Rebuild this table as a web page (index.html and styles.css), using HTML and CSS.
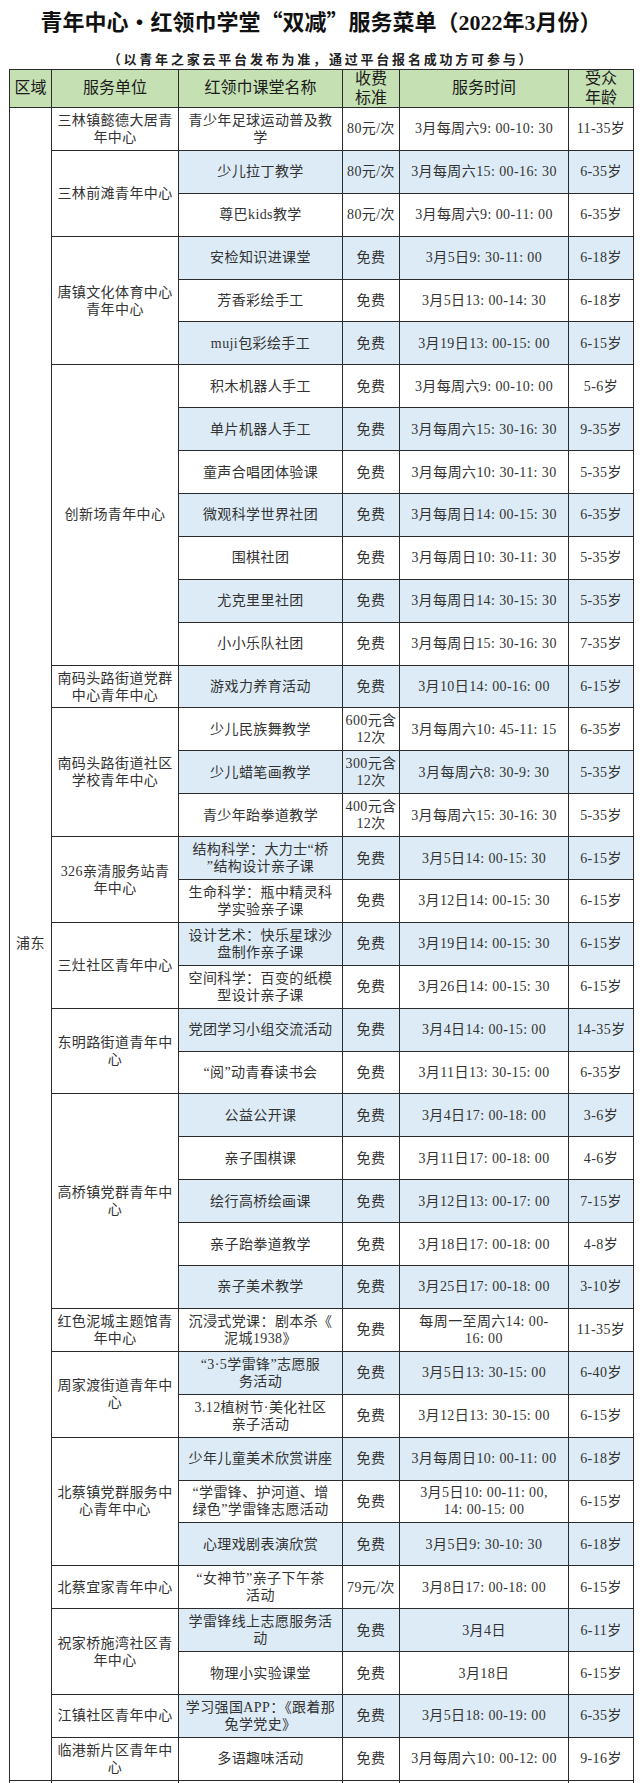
FILE: index.html
```html
<!DOCTYPE html>
<html lang="zh-CN">
<head>
<meta charset="utf-8">
<title>青年中心·红领巾学堂“双减”服务菜单</title>
<link rel="stylesheet" href="styles.css">
</head>
<body>
<div class="page">
  <h1 class="title">青年中心·红领巾学堂“双减”服务菜单（<span class="num">2022</span>年<span class="num">3</span>月份）</h1>
  <p class="sub">（以青年之家云平台发布为准，通过平台报名成功方可参与）</p>
  <table class="menu">
    <colgroup>
      <col class="c1"><col class="c2"><col class="c3"><col class="c4"><col class="c5"><col class="c6">
    </colgroup>
    <thead>
      <tr class="head">
        <th>区域</th><th>服务单位</th><th>红领巾课堂名称</th><th>收费<br>标准</th><th>服务时间</th><th>受众<br>年龄</th>
      </tr>
    </thead>
    <tbody>
      <tr class="r">
        <td class="u" rowspan="39">浦东</td>
        <td class="u">三林镇懿德大居青<br>年中心</td>
        <td>青少年足球运动普及教<br>学</td><td>80元/次</td><td>3月每周六9: 00-10: 30</td><td>11-35岁</td>
      </tr>
      <tr class="r b">
        <td class="u" rowspan="2">三林前滩青年中心</td>
        <td>少儿拉丁教学</td><td>80元/次</td><td>3月每周六15: 00-16: 30</td><td>6-35岁</td>
      </tr>
      <tr class="r">
        <td>尊巴kids教学</td><td>80元/次</td><td>3月每周六9: 00-11: 00</td><td>6-35岁</td>
      </tr>
      <tr class="r b">
        <td class="u" rowspan="3">唐镇文化体育中心<br>青年中心</td>
        <td>安检知识进课堂</td><td>免费</td><td>3月5日9: 30-11: 00</td><td>6-18岁</td>
      </tr>
      <tr class="r">
        <td>芳香彩绘手工</td><td>免费</td><td>3月5日13: 00-14: 30</td><td>6-18岁</td>
      </tr>
      <tr class="r b">
        <td>muji包彩绘手工</td><td>免费</td><td>3月19日13: 00-15: 00</td><td>6-15岁</td>
      </tr>
      <tr class="r">
        <td class="u" rowspan="7">创新场青年中心</td>
        <td>积木机器人手工</td><td>免费</td><td>3月每周六9: 00-10: 00</td><td>5-6岁</td>
      </tr>
      <tr class="r b">
        <td>单片机器人手工</td><td>免费</td><td>3月每周六15: 30-16: 30</td><td>9-35岁</td>
      </tr>
      <tr class="r">
        <td>童声合唱团体验课</td><td>免费</td><td>3月每周六10: 30-11: 30</td><td>5-35岁</td>
      </tr>
      <tr class="r b">
        <td>微观科学世界社团</td><td>免费</td><td>3月每周日14: 00-15: 30</td><td>6-35岁</td>
      </tr>
      <tr class="r">
        <td>围棋社团</td><td>免费</td><td>3月每周日10: 30-11: 30</td><td>5-35岁</td>
      </tr>
      <tr class="r b">
        <td>尤克里里社团</td><td>免费</td><td>3月每周日14: 30-15: 30</td><td>5-35岁</td>
      </tr>
      <tr class="r">
        <td>小小乐队社团</td><td>免费</td><td>3月每周日15: 30-16: 30</td><td>7-35岁</td>
      </tr>
      <tr class="r b">
        <td class="u">南码头路街道党群<br>中心青年中心</td>
        <td>游戏力养育活动</td><td>免费</td><td>3月10日14: 00-16: 00</td><td>6-15岁</td>
      </tr>
      <tr class="r">
        <td class="u" rowspan="3">南码头路街道社区<br>学校青年中心</td>
        <td>少儿民族舞教学</td><td>600元含<br>12次</td><td>3月每周六10: 45-11: 15</td><td>6-35岁</td>
      </tr>
      <tr class="r b">
        <td>少儿蜡笔画教学</td><td>300元含<br>12次</td><td>3月每周六8: 30-9: 30</td><td>5-35岁</td>
      </tr>
      <tr class="r">
        <td>青少年跆拳道教学</td><td>400元含<br>12次</td><td>3月每周六15: 30-16: 30</td><td>5-35岁</td>
      </tr>
      <tr class="r b">
        <td class="u" rowspan="2">326亲清服务站青<br>年中心</td>
        <td>结构科学：大力士“桥<br>”结构设计亲子课</td><td>免费</td><td>3月5日14: 00-15: 30</td><td>6-15岁</td>
      </tr>
      <tr class="r">
        <td>生命科学：瓶中精灵科<br>学实验亲子课</td><td>免费</td><td>3月12日14: 00-15: 30</td><td>6-15岁</td>
      </tr>
      <tr class="r b">
        <td class="u" rowspan="2">三灶社区青年中心</td>
        <td>设计艺术：快乐星球沙<br>盘制作亲子课</td><td>免费</td><td>3月19日14: 00-15: 30</td><td>6-15岁</td>
      </tr>
      <tr class="r">
        <td>空间科学：百变的纸模<br>型设计亲子课</td><td>免费</td><td>3月26日14: 00-15: 30</td><td>6-15岁</td>
      </tr>
      <tr class="r b">
        <td class="u" rowspan="2">东明路街道青年中<br>心</td>
        <td>党团学习小组交流活动</td><td>免费</td><td>3月4日14: 00-15: 00</td><td>14-35岁</td>
      </tr>
      <tr class="r">
        <td>“阅”动青春读书会</td><td>免费</td><td>3月11日13: 30-15: 00</td><td>6-35岁</td>
      </tr>
      <tr class="r b">
        <td class="u" rowspan="5">高桥镇党群青年中<br>心</td>
        <td>公益公开课</td><td>免费</td><td>3月4日17: 00-18: 00</td><td>3-6岁</td>
      </tr>
      <tr class="r">
        <td>亲子围棋课</td><td>免费</td><td>3月11日17: 00-18: 00</td><td>4-6岁</td>
      </tr>
      <tr class="r b">
        <td>绘行高桥绘画课</td><td>免费</td><td>3月12日13: 00-17: 00</td><td>7-15岁</td>
      </tr>
      <tr class="r">
        <td>亲子跆拳道教学</td><td>免费</td><td>3月18日17: 00-18: 00</td><td>4-8岁</td>
      </tr>
      <tr class="r b">
        <td>亲子美术教学</td><td>免费</td><td>3月25日17: 00-18: 00</td><td>3-10岁</td>
      </tr>
      <tr class="r">
        <td class="u">红色泥城主题馆青<br>年中心</td>
        <td>沉浸式党课：剧本杀《<br>泥城1938》</td><td>免费</td><td>每周一至周六14: 00-<br>16: 00</td><td>11-35岁</td>
      </tr>
      <tr class="r b">
        <td class="u" rowspan="2">周家渡街道青年中<br>心</td>
        <td>“3·5学雷锋”志愿服<br>务活动</td><td>免费</td><td>3月5日13: 30-15: 00</td><td>6-40岁</td>
      </tr>
      <tr class="r">
        <td>3.12植树节·美化社区<br>亲子活动</td><td>免费</td><td>3月12日13: 30-15: 00</td><td>6-15岁</td>
      </tr>
      <tr class="r b">
        <td class="u" rowspan="3">北蔡镇党群服务中<br>心青年中心</td>
        <td>少年儿童美术欣赏讲座</td><td>免费</td><td>3月每周日10: 00-11: 00</td><td>6-18岁</td>
      </tr>
      <tr class="r">
        <td>“学雷锋、护河道、增<br>绿色”学雷锋志愿活动</td><td>免费</td><td>3月5日10: 00-11: 00,<br>14: 00-15: 00</td><td>6-15岁</td>
      </tr>
      <tr class="r b">
        <td>心理戏剧表演欣赏</td><td>免费</td><td>3月5日9: 30-10: 30</td><td>6-18岁</td>
      </tr>
      <tr class="r">
        <td class="u">北蔡宜家青年中心</td>
        <td>“女神节”亲子下午茶<br>活动</td><td>79元/次</td><td>3月8日17: 00-18: 00</td><td>6-15岁</td>
      </tr>
      <tr class="r b">
        <td class="u" rowspan="2">祝家桥施湾社区青<br>年中心</td>
        <td>学雷锋线上志愿服务活<br>动</td><td>免费</td><td>3月4日</td><td>6-11岁</td>
      </tr>
      <tr class="r">
        <td>物理小实验课堂</td><td>免费</td><td>3月18日</td><td>6-15岁</td>
      </tr>
      <tr class="r b">
        <td class="u">江镇社区青年中心</td>
        <td>学习强国APP：《跟着那<br>兔学党史》</td><td>免费</td><td>3月5日18: 00-19: 00</td><td>6-35岁</td>
      </tr>
      <tr class="r">
        <td class="u">临港新片区青年中<br>心</td>
        <td>多语趣味活动</td><td>免费</td><td>3月每周六10: 00-12: 00</td><td>9-16岁</td>
      </tr>
      <tr class="r">
        <td class="u"></td><td class="u"></td><td></td><td></td><td></td><td></td>
      </tr>
    </tbody>
  </table>
</div>
</body>
</html>
```

FILE: styles.css
```css
html, body {
  margin: 0;
  padding: 0;
  background: #ffffff;
}

body {
  font-family: "Liberation Serif", "Noto Sans CJK SC", serif;
  color: #333333;
}

.page {
  padding: 0 7px 0 9px;
}

.title {
  margin: 0;
  height: 40px;
  line-height: 40px;
  text-align: center;
  font-family: "Noto Sans CJK SC", sans-serif;
  font-weight: 700;
  font-size: 22px;
  color: #111111;
  white-space: nowrap;
}

.title .num {
  font-family: "Liberation Serif", serif;
  font-weight: 700;
}

.sub {
  margin: 9px 0 0;
  height: 20px;
  line-height: 20px;
  text-align: center;
  font-family: "Noto Sans CJK SC", sans-serif;
  font-weight: 700;
  font-size: 13px;
  letter-spacing: 2.8px;
  color: #222222;
  white-space: nowrap;
}

.menu {
  width: 100%;
  border-collapse: collapse;
  table-layout: fixed;
}

.c1 { width: 42px; }
.c2 { width: 127px; }
.c3 { width: 164px; }
.c4 { width: 57px; }
.c5 { width: 169px; }
.c6 { width: 65px; }

.menu th,
.menu td {
  border: 1px solid #2b2b2b;
  padding: 0;
  text-align: center;
  vertical-align: middle;
  white-space: nowrap;
}

.menu th {
  height: 37px;
  background: #c5e0b3;
  font-family: "Liberation Sans", "Noto Sans CJK SC", sans-serif;
  font-weight: 400;
  font-size: 16px;
  line-height: 18.5px;
  color: #1a1a1a;
}

.menu td {
  font-size: 14px;
  line-height: 17px;
  letter-spacing: 0.4px;
  color: #333333;
  overflow: hidden;
}

.menu tr.r {
  height: 42.9px;
}

.menu tr.b td {
  background: #dcebf6;
}

.menu tr.b td.u,
.menu td.u {
  background: #ffffff;
}
```
